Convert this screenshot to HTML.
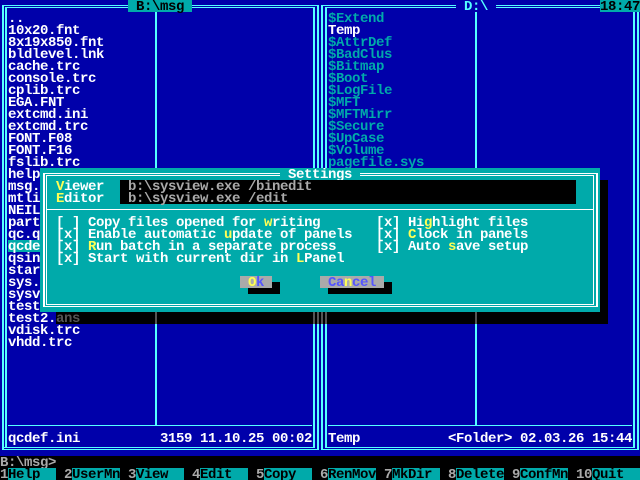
<!DOCTYPE html>
<html><head><meta charset="utf-8"><style>
html,body{margin:0;padding:0;background:#000;width:640px;height:480px;overflow:hidden}
#s{position:relative;width:640px;height:480px;overflow:hidden;background:#000;font:bold 14px/14px "Liberation Mono",monospace;letter-spacing:-0.4px}
#s div{position:absolute}
.t{white-space:pre;height:12px}
.w{color:#fff}.c{color:#0aa}.g{color:#aaa}.k{color:#000}.y{color:#ff5}.b{color:#55f}.d{color:#555}
.n{background:#5ff}.m{background:#fff}.e{background:#555}
i{font-style:normal;color:#ff5}
</style></head><body><div id="s">
<div style="left:0;top:0;width:640px;height:456px;background:#00a"></div>

<!-- left frame -->
<div class="n" style="left:2px;top:5px;width:316px;height:1px"></div>
<div class="n" style="left:5px;top:7px;width:310px;height:1px"></div>
<div class="n" style="left:2px;top:5px;width:2px;height:445px"></div>
<div class="n" style="left:5px;top:7px;width:2px;height:441px"></div>
<div class="n" style="left:313px;top:7px;width:2px;height:441px"></div>
<div class="n" style="left:317px;top:5px;width:2px;height:445px"></div>
<div class="n" style="left:2px;top:447px;width:313px;height:1px"></div>
<div class="n" style="left:2px;top:449px;width:317px;height:1px"></div>
<div class="n" style="left:8px;top:425px;width:304px;height:1px"></div>
<div class="n" style="left:155px;top:8px;width:2px;height:417px"></div>

<!-- right frame -->
<div class="n" style="left:322px;top:5px;width:278px;height:1px"></div>
<div class="n" style="left:325px;top:7px;width:275px;height:1px"></div>
<div class="n" style="left:321px;top:5px;width:2px;height:445px"></div>
<div class="n" style="left:325px;top:7px;width:2px;height:441px"></div>
<div class="n" style="left:633px;top:12px;width:2px;height:436px"></div>
<div class="n" style="left:637px;top:12px;width:2px;height:438px"></div>
<div class="n" style="left:325px;top:447px;width:310px;height:1px"></div>
<div class="n" style="left:321px;top:449px;width:318px;height:1px"></div>
<div class="n" style="left:328px;top:425px;width:304px;height:1px"></div>
<div class="n" style="left:475px;top:8px;width:2px;height:417px"></div>

<!-- titles -->
<div class="t k" style="left:128px;top:0;width:64px;background:#0aa"> B:\msg </div>
<div class="t" style="left:456px;top:0;width:40px;background:#00a;color:#5ff"> D:\ </div>
<div class="t k" style="left:600px;top:0;width:40px;background:#0aa">18:47</div>

<!-- left list -->
<div class="t w" style="left:8px;top:12px">..</div>
<div class="t w" style="left:8px;top:24px">10x20.fnt</div>
<div class="t w" style="left:8px;top:36px">8x19x850.fnt</div>
<div class="t w" style="left:8px;top:48px">bldlevel.lnk</div>
<div class="t w" style="left:8px;top:60px">cache.trc</div>
<div class="t w" style="left:8px;top:72px">console.trc</div>
<div class="t w" style="left:8px;top:84px">cplib.trc</div>
<div class="t w" style="left:8px;top:96px">EGA.FNT</div>
<div class="t w" style="left:8px;top:108px">extcmd.ini</div>
<div class="t w" style="left:8px;top:120px">extcmd.trc</div>
<div class="t w" style="left:8px;top:132px">FONT.F08</div>
<div class="t w" style="left:8px;top:144px">FONT.F16</div>
<div class="t w" style="left:8px;top:156px">fslib.trc</div>
<div class="t w" style="left:8px;top:168px">help</div>
<div class="t w" style="left:8px;top:180px">msg.</div>
<div class="t w" style="left:8px;top:192px">mtli</div>
<div class="t w" style="left:8px;top:204px">NEIL</div>
<div class="t w" style="left:8px;top:216px">part</div>
<div class="t w" style="left:8px;top:228px">qc.q</div>
<div class="t w" style="left:8px;top:240px;width:32px;background:#0aa">qcde</div>
<div class="t w" style="left:8px;top:252px">qsin</div>
<div class="t w" style="left:8px;top:264px">star</div>
<div class="t w" style="left:8px;top:276px">sys.</div>
<div class="t w" style="left:8px;top:288px">sysv</div>
<div class="t w" style="left:8px;top:300px">test</div>
<div class="t w" style="left:8px;top:312px">test2.</div>
<div class="t w" style="left:8px;top:324px">vdisk.trc</div>
<div class="t w" style="left:8px;top:336px">vhdd.trc</div>

<!-- right list -->
<div class="t c" style="left:328px;top:12px">$Extend</div>
<div class="t w" style="left:328px;top:24px">Temp</div>
<div class="t c" style="left:328px;top:36px">$AttrDef</div>
<div class="t c" style="left:328px;top:48px">$BadClus</div>
<div class="t c" style="left:328px;top:60px">$Bitmap</div>
<div class="t c" style="left:328px;top:72px">$Boot</div>
<div class="t c" style="left:328px;top:84px">$LogFile</div>
<div class="t c" style="left:328px;top:96px">$MFT</div>
<div class="t c" style="left:328px;top:108px">$MFTMirr</div>
<div class="t c" style="left:328px;top:120px">$Secure</div>
<div class="t c" style="left:328px;top:132px">$UpCase</div>
<div class="t c" style="left:328px;top:144px">$Volume</div>
<div class="t c" style="left:328px;top:156px">pagefile.sys</div>

<!-- status -->
<div class="t w" style="left:8px;top:432px">qcdef.ini</div>
<div class="t w" style="left:160px;top:432px">3159 11.10.25 00:02</div>
<div class="t w" style="left:328px;top:432px">Temp</div>
<div class="t w" style="left:448px;top:432px">&lt;Folder&gt; 02.03.26 15:44</div>

<!-- shadow -->
<div style="left:56px;top:180px;width:552px;height:144px;background:#000"></div>
<div class="e" style="left:155px;top:312px;width:2px;height:12px"></div>
<div class="e" style="left:313px;top:312px;width:2px;height:12px"></div>
<div class="e" style="left:317px;top:312px;width:2px;height:12px"></div>
<div class="e" style="left:321px;top:312px;width:2px;height:12px"></div>
<div class="e" style="left:325px;top:312px;width:2px;height:12px"></div>
<div class="e" style="left:475px;top:312px;width:2px;height:12px"></div>
<div class="t d" style="left:56px;top:312px">ans</div>

<!-- dialog -->
<div style="left:40px;top:168px;width:560px;height:144px;background:#0aa"></div>
<div class="m" style="left:43px;top:173px;width:555px;height:1px"></div>
<div class="m" style="left:46px;top:175px;width:548px;height:1px"></div>
<div class="m" style="left:43px;top:173px;width:2px;height:134px"></div>
<div class="m" style="left:46px;top:175px;width:1px;height:130px"></div>
<div class="m" style="left:593px;top:175px;width:1px;height:130px"></div>
<div class="m" style="left:596px;top:173px;width:2px;height:134px"></div>
<div class="m" style="left:46px;top:304px;width:548px;height:1px"></div>
<div class="m" style="left:43px;top:306px;width:555px;height:1px"></div>
<div class="m" style="left:47px;top:209px;width:546px;height:1px"></div>
<div class="t w" style="left:280px;top:168px;width:80px;background:#0aa"> Settings </div>

<div class="t w" style="left:56px;top:180px"><i>V</i>iewer</div>
<div class="t w" style="left:56px;top:192px"><i>E</i>ditor</div>
<div style="left:120px;top:180px;width:456px;height:24px;background:#000"></div>
<div class="t g" style="left:128px;top:180px">b:\sysview.exe /binedit</div>
<div class="t g" style="left:128px;top:192px">b:\sysview.exe /edit</div>

<div class="t w" style="left:56px;top:216px">[ ] Copy files opened for <i>w</i>riting</div>
<div class="t w" style="left:56px;top:228px">[x] Enable automatic <i>u</i>pdate of panels</div>
<div class="t w" style="left:56px;top:240px">[x] <i>R</i>un batch in a separate process</div>
<div class="t w" style="left:56px;top:252px">[x] Start with current dir in <i>L</i>Panel</div>
<div class="t w" style="left:376px;top:216px">[x] Hi<i>g</i>hlight files</div>
<div class="t w" style="left:376px;top:228px">[x] <i>C</i>lock in panels</div>
<div class="t w" style="left:376px;top:240px">[x] Auto <i>s</i>ave setup</div>

<div style="left:248px;top:282px;width:32px;height:12px;background:#000"></div>
<div style="left:328px;top:282px;width:64px;height:12px;background:#000"></div>
<div class="t b" style="left:240px;top:276px;width:32px;background:#aaa"> <i>O</i>k </div>
<div class="t b" style="left:320px;top:276px;width:64px;background:#aaa"> Ca<i>n</i>cel </div>

<!-- cmd -->
<div class="t g" style="left:0;top:456px">B:\msg&gt;</div>

<!-- keybar -->
<div class="t g" style="left:0;top:468px">1</div><div class="t k" style="left:8px;top:468px;width:48px;background:#0aa">Help</div>
<div class="t g" style="left:64px;top:468px">2</div><div class="t k" style="left:72px;top:468px;width:48px;background:#0aa">UserMn</div>
<div class="t g" style="left:128px;top:468px">3</div><div class="t k" style="left:136px;top:468px;width:48px;background:#0aa">View</div>
<div class="t g" style="left:192px;top:468px">4</div><div class="t k" style="left:200px;top:468px;width:48px;background:#0aa">Edit</div>
<div class="t g" style="left:256px;top:468px">5</div><div class="t k" style="left:264px;top:468px;width:48px;background:#0aa">Copy</div>
<div class="t g" style="left:320px;top:468px">6</div><div class="t k" style="left:328px;top:468px;width:48px;background:#0aa">RenMov</div>
<div class="t g" style="left:384px;top:468px">7</div><div class="t k" style="left:392px;top:468px;width:48px;background:#0aa">MkDir</div>
<div class="t g" style="left:448px;top:468px">8</div><div class="t k" style="left:456px;top:468px;width:48px;background:#0aa">Delete</div>
<div class="t g" style="left:512px;top:468px">9</div><div class="t k" style="left:520px;top:468px;width:48px;background:#0aa">ConfMn</div>
<div class="t g" style="left:576px;top:468px">10</div><div class="t k" style="left:592px;top:468px;width:48px;background:#0aa">Quit</div>
</div></body></html>
